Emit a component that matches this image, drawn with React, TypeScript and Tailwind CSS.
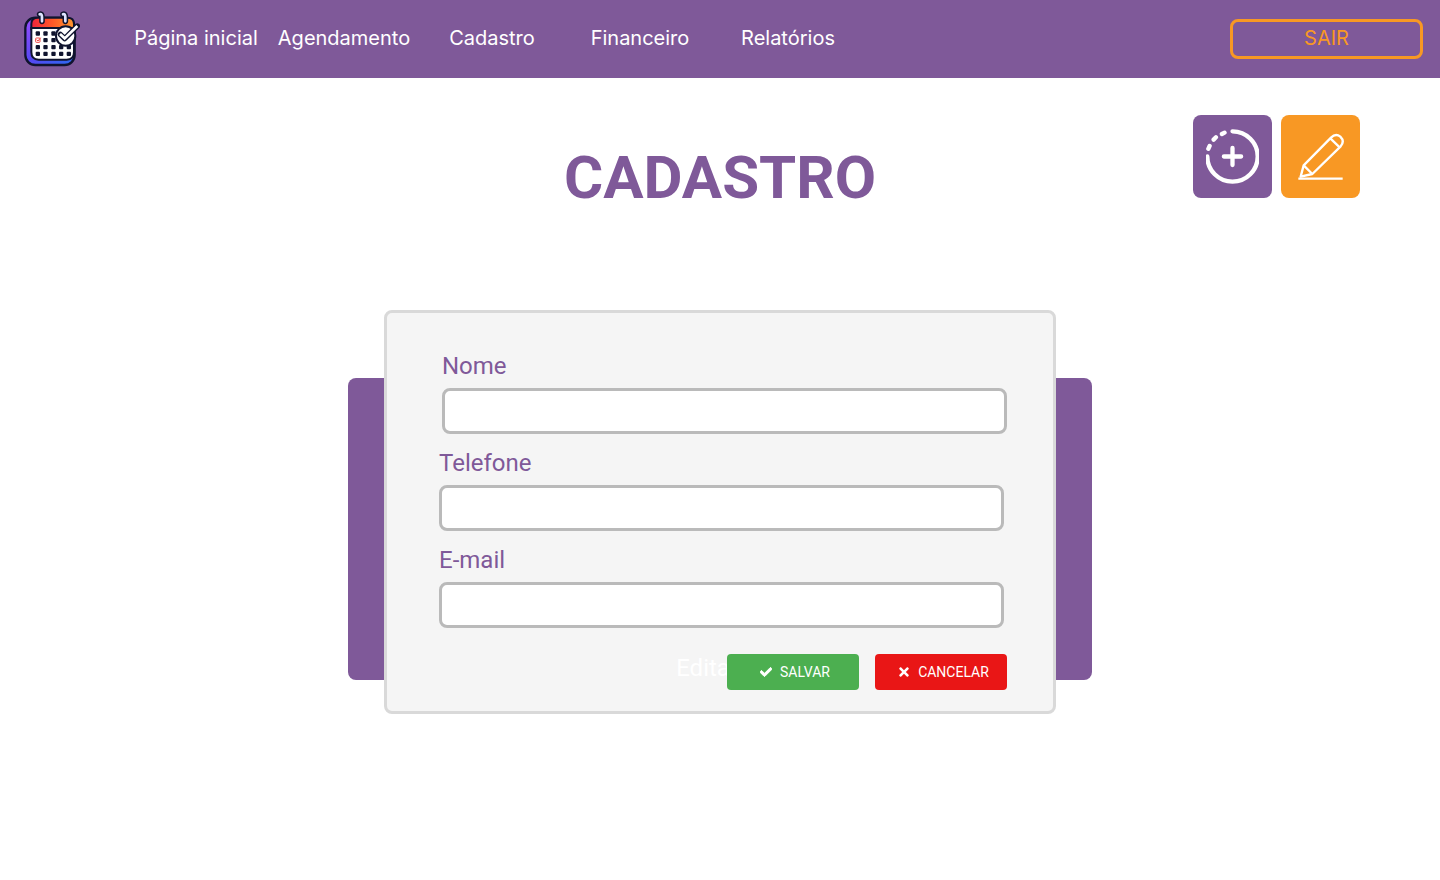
import { FaCheck, FaTimes } from "react-icons/fa";

const links = ["Página inicial", "Agendamento", "Cadastro", "Financeiro", "Relatórios"];

const dots = [
  [65, 88], [88, 88], [112, 88],
  [88, 108], [112, 108],
  [65, 129], [88, 129], [112, 129], [135, 129], [158, 129],
  [65, 149], [88, 149], [112, 149], [135, 149], [158, 149],
];

function Logo() {
  return (
    <svg viewBox="24 21 168 168" className="size-14" aria-hidden="true">
      <defs>
        <linearGradient id="body" x1="0" y1="0" x2="1" y2="1">
          <stop offset="0" stopColor="#9b4dff" />
          <stop offset="0.5" stopColor="#5548f2" />
          <stop offset="1" stopColor="#2a6cf0" />
        </linearGradient>
        <linearGradient id="top" x1="0" y1="0" x2="1" y2="0">
          <stop offset="0" stopColor="#f0223c" />
          <stop offset="0.5" stopColor="#ff5a28" />
          <stop offset="1" stopColor="#ff9a2e" />
        </linearGradient>
      </defs>
      <rect x="28" y="41" width="148" height="142" rx="30" fill="url(#body)" stroke="#10142e" strokeWidth="7" />
      <path d="M46 76V60Q46 41 66 41H154Q174 41 174 60V76Z" fill="url(#top)" stroke="#10142e" strokeWidth="6" />
      <path d="M46 72H174V144Q174 167 152 167H68Q46 167 46 144Z" fill="#fff" stroke="#10142e" strokeWidth="6" />
      <path d="M119 78V108L135 122H171V78Z" fill="#b9c3ee" />
      {dots.map(([x, y]) => (
        <rect key={`${x}-${y}`} x={x - 6} y={y - 6} width="13" height="13" rx="3" fill="#10142e" />
      ))}
      <rect x="59" y="102" width="13" height="13" rx="2" fill="#fff" stroke="#ef4444" strokeWidth="3" />
      <path d="M62 107L66 111L74 101" fill="none" stroke="#ef4444" strokeWidth="3" />
      {[71, 141].map((x) => (
        <g key={x} fill="none" strokeLinecap="round">
          <path d={`M${x} 31Q${x + 7} 28 ${x + 7} 40V52`} stroke="#10142e" strokeWidth="17" />
          <path d={`M${x} 31Q${x + 7} 28 ${x + 7} 40V52`} stroke="#dfe4ff" strokeWidth="8" />
        </g>
      ))}
      <circle cx="149" cy="96" r="29" fill="#fff" stroke="#10142e" strokeWidth="6" />
      <path d="M133 91L146 104L184 66" fill="none" stroke="#10142e" strokeWidth="16" strokeLinejoin="round" strokeLinecap="round" />
      <path d="M132 90L146 103L184 66" fill="none" stroke="#fff" strokeWidth="8" />
    </svg>
  );
}

function AddIcon() {
  return (
    <svg viewBox="62 71 160 166" className="h-[55px] w-[53px]" fill="none" stroke="#fff" strokeWidth="13" strokeLinecap="round" aria-hidden="true">
      <path d="M142 78A76 76 0 1 1 66 154" />
      <path d="M110 86L118 82M85 103L92 96M69 131L73 122" />
      <path d="M142 128V180M116 154H168" />
    </svg>
  );
}

function EditIcon() {
  return (
    <svg viewBox="339 84 138 141" className="ml-px h-[47px] w-[46px]" fill="none" stroke="#fff" strokeWidth="7" strokeLinejoin="round" aria-hidden="true">
      <path d="M356 181L438 98Q452 84 466 95Q480 109 467 124L382 207L347 215Z" />
      <path d="M436 100L464 127M356 181L382 207M340 221H473" />
    </svg>
  );
}

function Field({ id, label, type, className }: { id: string; label: string; type: string; className: string }) {
  return (
    <div className={`flex flex-col gap-1 ${className}`}>
      <label htmlFor={id} className="text-2xl leading-9 text-[#7f5999]">{label}</label>
      <input id={id} type={type} className="h-[46px] w-full rounded-lg border-3 border-[#bababa] bg-white px-3 text-lg" />
    </div>
  );
}

export default function App() {
  return (
    <div className="min-h-screen bg-white font-[Roboto,sans-serif]">
      <header className="flex h-[78px] items-center bg-[#7f5999] pr-[17px] pl-6 font-[Inter,sans-serif] text-xl">
        <a href="#inicio" aria-label="Início" className="shrink-0"><Logo /></a>
        <nav className="ml-[42px] flex">
          {links.map((link) => (
            <a key={link} href="#" className="w-[148px] pb-0.5 text-center whitespace-nowrap text-white">{link}</a>
          ))}
        </nav>
        <button type="button" className="ml-auto h-10 w-[193px] rounded-lg border-3 border-[#f89824] pb-0.5 text-[#f89824]">SAIR</button>
      </header>

      <main className="pt-[37px] pb-10">
        <div className="grid grid-cols-[1fr_auto_1fr] items-start px-20">
          <h1 className="col-start-2 mt-[33px] text-6xl leading-none font-bold text-[#7f5999]">CADASTRO</h1>
          <div className="flex gap-[9px] justify-self-end">
            <button type="button" aria-label="Adicionar" className="flex h-[83px] w-[79px] items-center justify-center rounded-lg bg-[#7f5999]"><AddIcon /></button>
            <button type="button" aria-label="Editar cadastro" className="flex h-[83px] w-[79px] items-center justify-center rounded-lg bg-[#f89824]"><EditIcon /></button>
          </div>
        </div>

        <section className="mx-auto mt-[102px] grid max-w-[744px]">
          <div className="col-start-1 row-start-1 mt-[68px] mb-[34px] rounded-lg bg-[#7f5999]" />
          <form className="z-10 col-start-1 row-start-1 mx-9 rounded-lg border-3 border-[#d9d9d9] bg-[#f5f5f5] pt-[35px] pr-[46px] pb-[21px] pl-[52px]">
            <div className="flex flex-col gap-[11px]">
              <Field id="nome" label="Nome" type="text" className="ml-[3px]" />
              <Field id="telefone" label="Telefone" type="tel" className="mr-[3px]" />
              <Field id="email" label="E-mail" type="email" className="mr-[3px]" />
            </div>
            <div className="relative mt-[26px] flex justify-end gap-4">
              <span className="absolute right-[269px] -top-1 text-2xl leading-9 text-white">Editar</span>
              <button type="button" className="z-10 flex h-9 w-[132px] items-center justify-center gap-2 rounded bg-[#4caf50] pl-1 text-sm text-white">
                <FaCheck className="size-3 stroke-white stroke-[40]" />SALVAR
              </button>
              <button type="button" className="z-10 flex h-9 w-[132px] items-center justify-center gap-[7px] rounded bg-[#e91616] pl-1 text-sm text-white">
                <FaTimes className="size-3.5" />CANCELAR
              </button>
            </div>
          </form>
        </section>
      </main>
    </div>
  );
}
